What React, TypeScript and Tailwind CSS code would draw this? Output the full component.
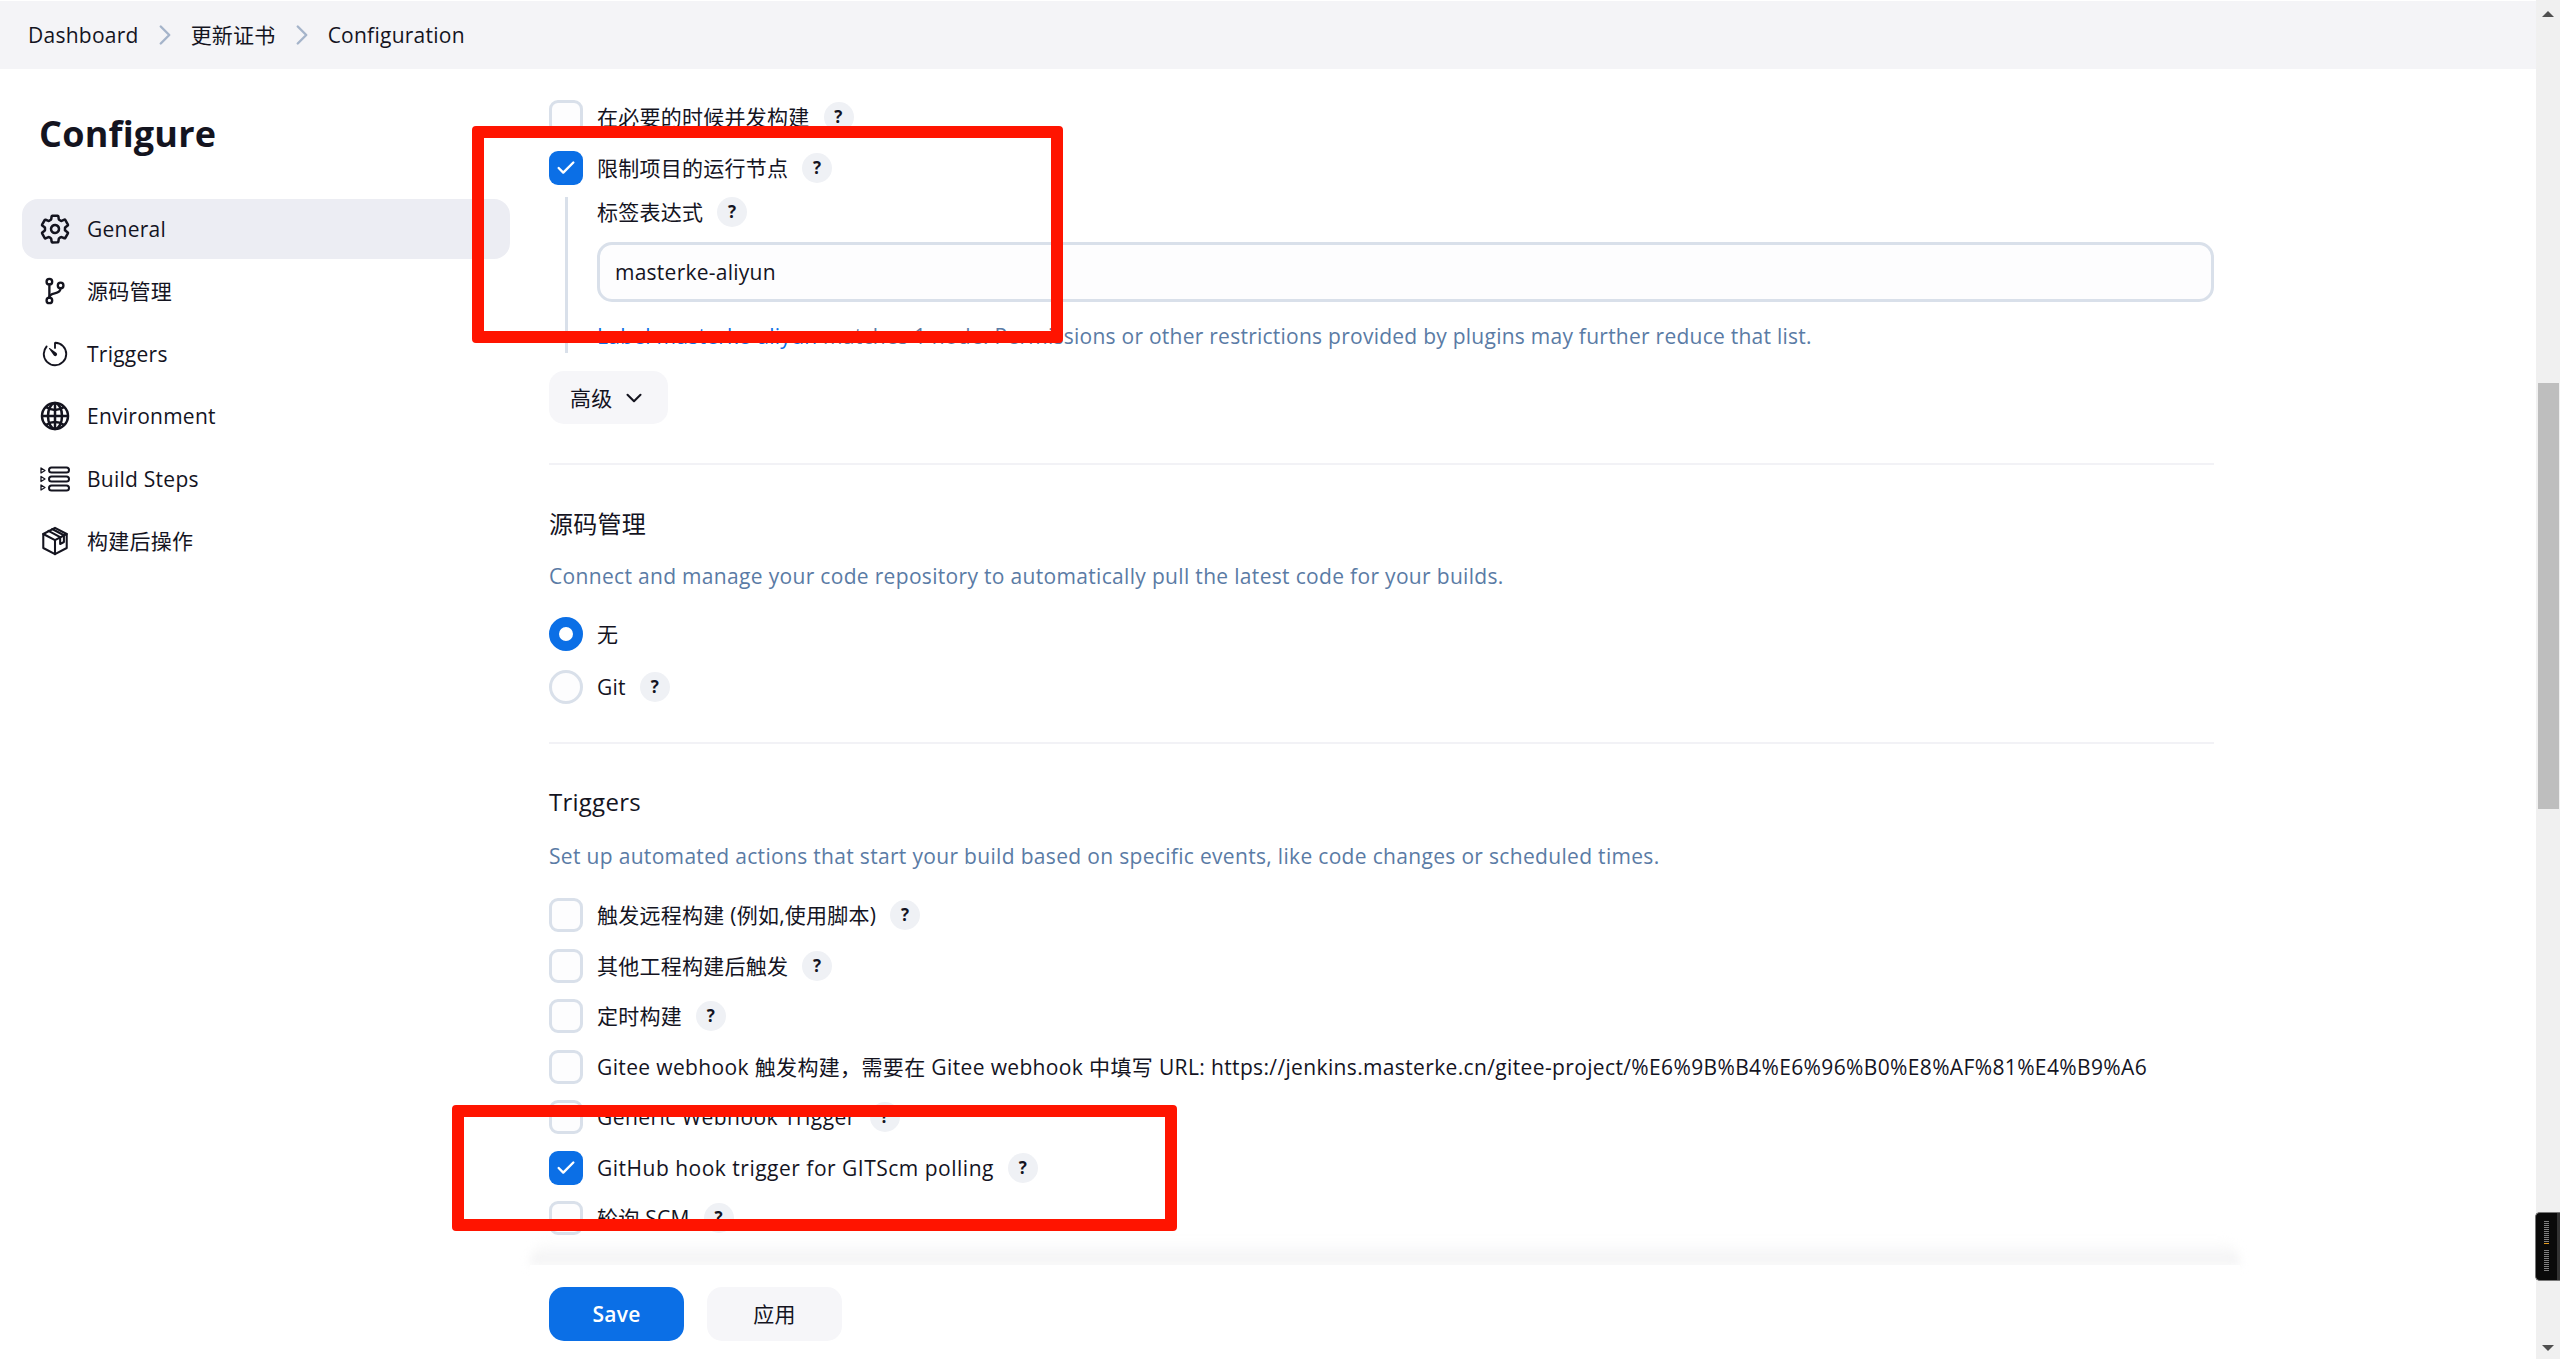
import { IoSettingsOutline, IoGitBranchOutline, IoTimerOutline, IoGlobeOutline } from "react-icons/io5";
import { LuChevronRight, LuChevronDown, LuCheck } from "react-icons/lu";
import type { ReactNode } from "react";

function Help() {
    return (
        <span className="ml-[14px] flex h-[30px] w-[30px] shrink-0 items-center justify-center rounded-full bg-[#eff1f5] text-[17px] font-bold text-[#14141f]">
            ?
        </span>
    );
}

function Check({ label, checked = false, help = true, labelClass = "" }: { label: string; checked?: boolean; help?: boolean; labelClass?: string }) {
    return (
        <div className="flex h-[34px] items-center">
            {checked ? (
                <span className="flex h-[34px] w-[34px] shrink-0 items-center justify-center rounded-[9px] bg-[#0b6fe6] text-white">
                    <LuCheck size={22} strokeWidth={2.6} />
                </span>
            ) : (
                <span className="h-[34px] w-[34px] shrink-0 rounded-[9px] border-[3px] border-[#d9e0ea] bg-[#fdfdfe]" />
            )}
            <span className={`ml-[14px] whitespace-nowrap ${labelClass}`}>{label}</span>
            {help && <Help />}
        </div>
    );
}

function BuildStepsIcon() {
    return (
        <svg viewBox="0 0 30 26" className="h-[26px] w-[30px]" fill="none" stroke="currentColor" strokeWidth="2">
            <path d="M1 2l4 2.5L1 7zM1 10.5l4 2.5-4 2.5zM1 19l4 2.5L1 24z" strokeWidth="1.3" strokeLinejoin="round" />
            <rect x="9" y="1.5" width="20" height="5" rx="2.5" />
            <rect x="9" y="10.5" width="20" height="5" rx="2.5" />
            <rect x="9" y="19.5" width="20" height="5" rx="2.5" />
        </svg>
    );
}

function BoxIcon() {
    return (
        <svg viewBox="0 0 32 32" className="h-[30px] w-[30px]" fill="none" stroke="currentColor" strokeWidth="2.2" strokeLinejoin="round" strokeLinecap="round">
            <path d="M16 2l12.5 6.5v15L16 30 3.5 23.5v-15z" />
            <path d="M3.5 8.5L16 15l12.5-6.5M16 15v15" />
            <path d="M9 5.2l12.5 6.6v7.4l4-2.1v-7.2L13 3.2" />
        </svg>
    );
}

function NavItem({ icon, label, active = false }: { icon: ReactNode; label: string; active?: boolean }) {
    return (
        <div className={active ? "flex h-[60px] items-center rounded-2xl bg-[#ecedf3] pl-[17px]" : "flex h-[60px] items-center pl-[17px]"}>
            <span className="flex w-[32px] justify-center text-[#14141f]">{icon}</span>
            <span className="ml-[16px]">{label}</span>
        </div>
    );
}

function Desc({ children }: { children: ReactNode }) {
    return <p className="tracking-[0.32px] text-[#5a7ba5]">{children}</p>;
}

export default function App() {
    return (
        <div className="relative flex h-screen w-full overflow-hidden bg-white text-[21px] leading-[30px] tracking-[0.25px] text-[#14141f] [font-family:'Open_Sans','Noto_Sans_CJK_SC',sans-serif]">
            <div className="flex min-w-0 flex-1 flex-col">
                {/* breadcrumb */}
                <div className="mt-px flex h-[68px] shrink-0 items-center bg-[#f4f4f7] pl-[28px]">
                    <span>Dashboard</span>
                    <LuChevronRight size={34} strokeWidth={1.7} className="mx-[9px] text-[#a5b4ca]" />
                    <span>更新证书</span>
                    <LuChevronRight size={34} strokeWidth={1.7} className="mx-[9px] text-[#a5b4ca]" />
                    <span>Configuration</span>
                </div>

                <div className="flex min-h-0 flex-1">
                    {/* sidebar */}
                    <aside className="w-[510px] shrink-0 pl-[22px]">
                        <h1 className="mt-[43px] pl-[17px] text-[36px] leading-[44px] font-bold tracking-[0.2px]">Configure</h1>
                        <nav className="mt-[43px] flex flex-col gap-[2.4px]">
                            <NavItem active icon={<IoSettingsOutline size={32} className="[&_*]:[stroke-width:40]" />} label="General" />
                            <NavItem icon={<IoGitBranchOutline size={30} className="[&_*]:[stroke-width:40]" />} label="源码管理" />
                            <NavItem icon={<IoTimerOutline size={30} />} label="Triggers" />
                            <NavItem icon={<IoGlobeOutline size={32} className="[&_*]:[stroke-width:40]" />} label="Environment" />
                            <NavItem icon={<BuildStepsIcon />} label="Build Steps" />
                            <NavItem icon={<BoxIcon />} label="构建后操作" />
                        </nav>
                    </aside>

                    {/* form */}
                    <main className="relative min-w-0 flex-1 overflow-hidden pl-[39px]">
                        <div className="w-[1665px]">
                            <div className="mt-[31px] flex flex-col gap-[17px]">
                                <Check label="在必要的时候并发构建" />
                                <Check checked label="限制项目的运行节点" />
                            </div>
                            <div className="ml-[16px] mt-[12px] border-l-[3px] border-[#d9e0ea] pl-[29px]">
                                <div className="flex h-[30px] items-center">
                                    <span>标签表达式</span>
                                    <Help />
                                </div>
                                <div className="mt-[15px] flex h-[60px] items-center rounded-[15px] border-[3px] border-[#d9e0ea] bg-[#fdfdfe] pl-[15px]">
                                    masterke-aliyun
                                </div>
                                <p className="mt-[19px] pb-[2px] text-[#5a7ba5]">
                                    <span className="text-[#0b6fe6]">Label masterke-aliyun</span> matches 1 node. Permissions or other restrictions provided by plugins may further reduce that list.
                                </p>
                            </div>
                            <button className="mt-[18px] flex h-[53px] w-[119px] items-center gap-[8px] rounded-[15px] bg-[#f6f6f9] pl-[21px]">
                                高级 <LuChevronDown size={26} strokeWidth={1.9} />
                            </button>
                            <div className="mt-[39px] h-[2px] bg-[#f2f2f6]" />
                            <h2 className="mt-[43px] text-[24px] leading-[32px]">源码管理</h2>
                            <div className="mt-[21px]">
                                <Desc>Connect and manage your code repository to automatically pull the latest code for your builds.</Desc>
                            </div>
                            <div className="mt-[26px] flex h-[34px] items-center">
                                <span className="h-[34px] w-[34px] rounded-full border-[10px] border-[#0b6fe6] bg-white" />
                                <span className="ml-[14px]">无</span>
                            </div>
                            <div className="mt-[19px] flex h-[34px] items-center">
                                <span className="h-[34px] w-[34px] rounded-full border-[3px] border-[#d9e0ea] bg-[#fdfdfe]" />
                                <span className="ml-[14px]">Git</span>
                                <Help />
                            </div>
                            <div className="mt-[38px] h-[2px] bg-[#f2f2f6]" />
                            <h2 className="mt-[42px] text-[24px] leading-[32px]">Triggers</h2>
                            <div className="mt-[23px]">
                                <Desc>Set up automated actions that start your build based on specific events, like code changes or scheduled times.</Desc>
                            </div>
                            <div className="mt-[27px] flex flex-col gap-[16.5px]">
                                <Check label="触发远程构建 (例如,使用脚本)" />
                                <Check label="其他工程构建后触发" />
                                <Check label="定时构建" />
                                <Check help={false} labelClass="tracking-[0.36px]" label="Gitee webhook 触发构建，需要在 Gitee webhook 中填写 URL: https://jenkins.masterke.cn/gitee-project/%E6%9B%B4%E6%96%B0%E8%AF%81%E4%B9%A6" />
                                <Check labelClass="tracking-[0.45px]" label="Generic Webhook Trigger" />
                                <Check checked labelClass="tracking-[0.5px]" label="GitHub hook trigger for GITScm polling" />
                                <Check label="轮询 SCM" />
                            </div>
                        </div>
                    </main>
                </div>
            </div>

            {/* scrollbar */}
            <div className="flex h-full w-[24px] shrink-0 flex-col items-center bg-[#f0f0f0]">
                <span className="mt-[11px] h-0 w-0 border-x-[6px] border-b-[6px] border-x-transparent border-b-[#505050]" />
                <div className="mt-[366px] h-[426px] w-[21px] bg-[#bebebe]" />
                <span className="mt-auto mb-[8px] h-0 w-0 border-x-[6px] border-t-[6px] border-x-transparent border-t-[#505050]" />
            </div>

            {/* save bar, stays over the form */}
            <div className="absolute bottom-0 left-[530px] w-[1710px]">
                <div className="h-[26px] rounded-t-3xl bg-gradient-to-b from-transparent to-[#f1f1f2] blur-[5px]" />
                <div className="relative flex h-[94px] items-start gap-[23px] bg-white pl-[19px] pt-[22px]">
                    <button className="h-[54px] w-[135px] rounded-[15px] bg-[#0b6fe6] font-semibold text-white">Save</button>
                    <button className="h-[54px] w-[135px] rounded-[15px] bg-[#f6f6f9]">应用</button>
                </div>
            </div>

            {/* annotation boxes drawn on the screenshot */}
            <div className="absolute left-[472px] top-[126px] h-[217px] w-[591px] rounded-[4px] border-[12px] border-[#ff1400]" />
            <div className="absolute left-[452px] top-[1105px] h-[126px] w-[725px] rounded-[4px] border-[12px] border-[#ff1400]" />

            {/* docked widget over the scrollbar */}
            <div className="absolute right-0 top-[1212px] flex h-[69px] w-[25px] overflow-hidden rounded-l-[5px] border-y border-l border-[#777] bg-[#0a0a0a]">
                <div className="flex flex-1 flex-col gap-[1px] pl-[8px] pt-[8px]">
                    {Array.from({ length: 12 }).map((_, i) => (
                        <span key={i} className={i === 11 ? "h-px w-[5px] shrink-0 bg-[#e39a1d]" : "h-px w-[5px] shrink-0 bg-[#808080]"} />
                    ))}
                    <span className="h-[4px] shrink-0" />
                    {Array.from({ length: 11 }).map((_, i) => (
                        <span key={i} className="h-px w-[5px] shrink-0 bg-[#808080]" />
                    ))}
                </div>
                <div className="w-[3px] bg-[#333]" />
            </div>
        </div>
    );
}
